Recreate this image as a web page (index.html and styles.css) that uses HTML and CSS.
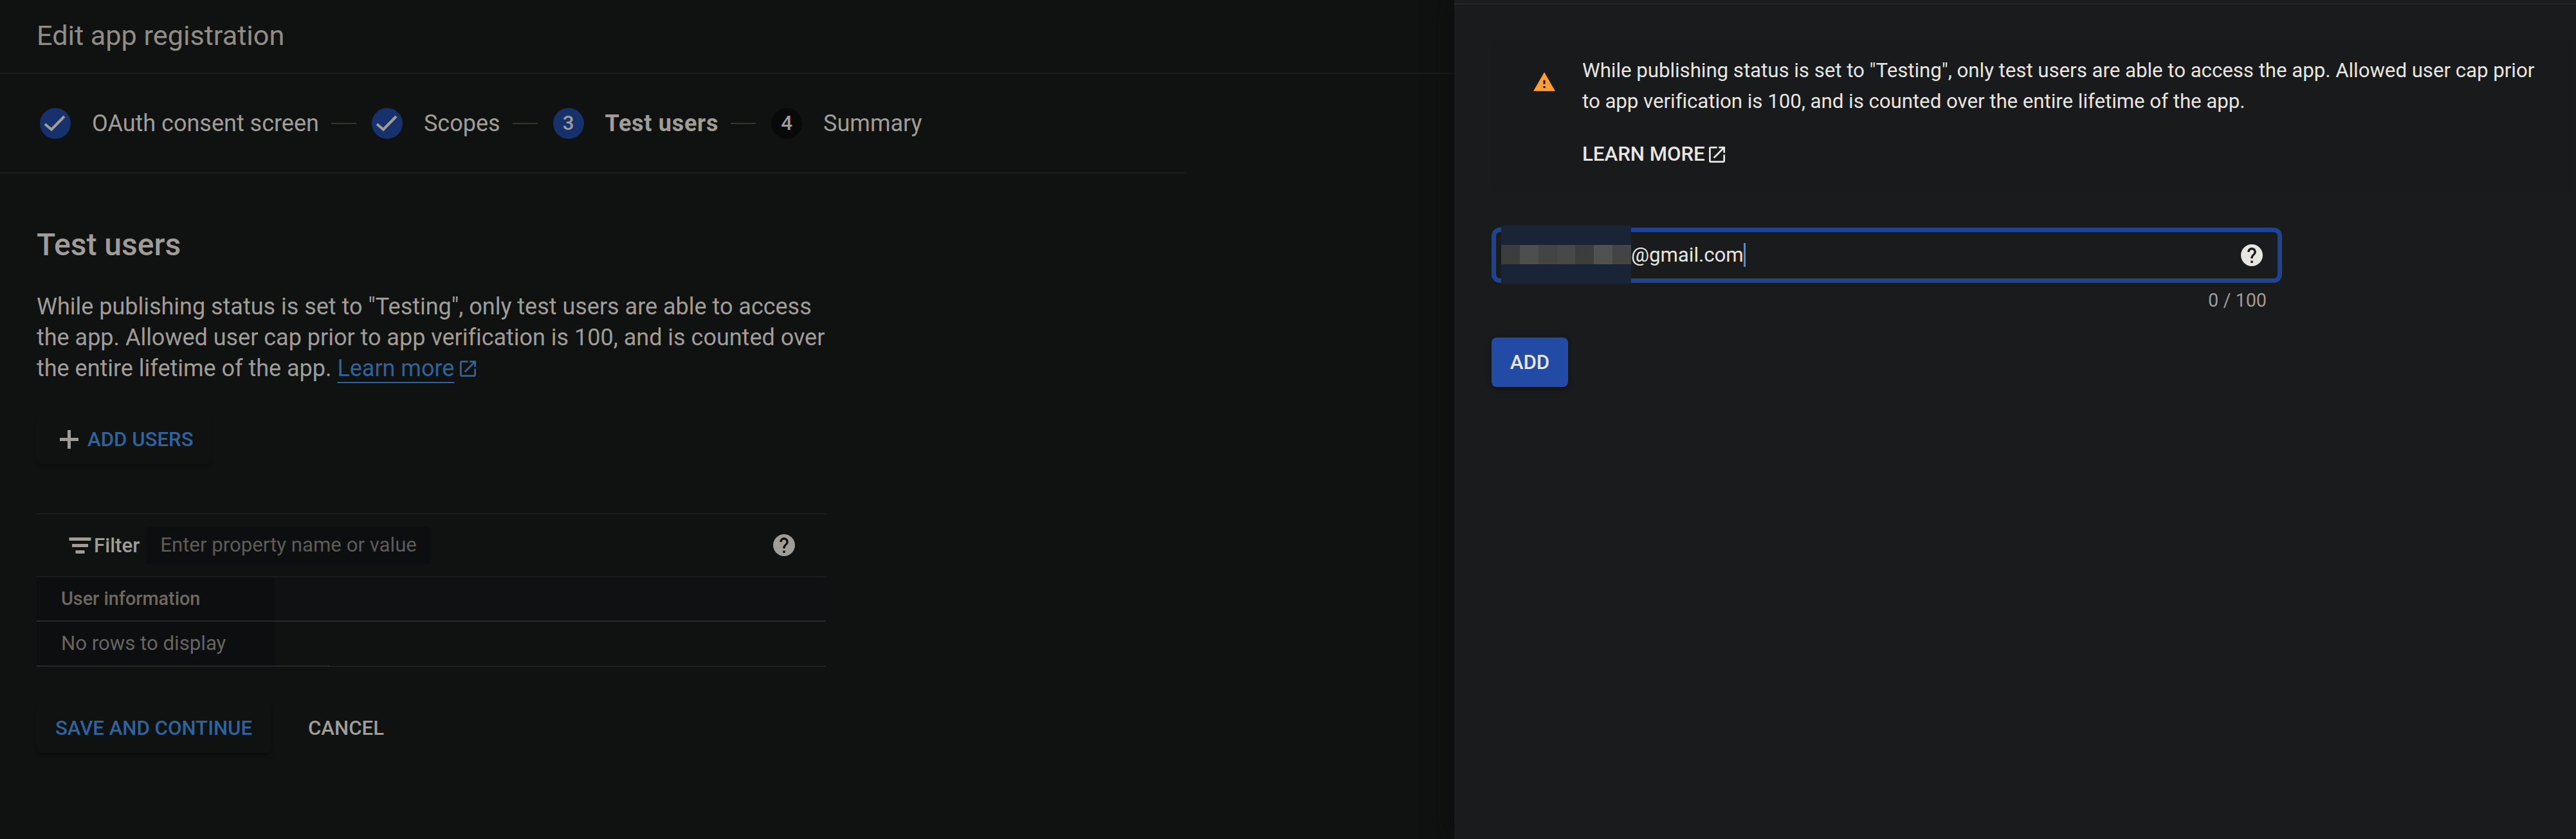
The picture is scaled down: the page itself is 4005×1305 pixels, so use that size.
FILE: index.html
```html
<!DOCTYPE html>
<html lang="en">
<head>
<meta charset="utf-8">
<title>Edit app registration</title>
<link rel="stylesheet" href="styles.css">
</head>
<body>
<svg class="defs" aria-hidden="true">
  <symbol id="help" viewBox="2 2 20 20"><path d="M12 2C6.48 2 2 6.48 2 12s4.480 10 10 10 10-4.480 10-10S17.520 2 12 2zm1 17h-2v-2h2v2zm2.070-7.750l-.9.920C13.450 12.900 13 13.500 13 15h-2v-.5c0-1.100.45-2.100 1.170-2.830l1.240-1.260c.37-.36.59-.86.59-1.410 0-1.100-.9-2-2-2s-2 .9-2 2H8c0-2.210 1.790-4 4-4s4 1.790 4 4c0 .88-.36 1.680-.93 2.250z"/></symbol>
  <symbol id="launch" viewBox="3 3 18 18"><path d="M19 19H5V5h7V3H5a2 2 0 0 0-2 2v14a2 2 0 0 0 2 2h14c1.100 0 2-.9 2-2v-7h-2v7zM14 3v2h3.590l-9.830 9.830 1.410 1.410L19 6.410V10h2V3h-7z"/></symbol>
  <symbol id="check" viewBox="0 0 48 48"><path d="M8 25l10 8.500L38 13" fill="none" stroke="currentColor" stroke-width="4.200"/></symbol>
</svg>
<div class="app">
  <main class="page">
    <header class="title">Edit app registration</header>
    <nav class="stepper">
      <span class="dot done"><svg><use href="#check"/></svg></span><span class="step">OAuth consent screen</span><i class="dash"></i>
      <span class="dot done"><svg><use href="#check"/></svg></span><span class="step">Scopes</span><i class="dash"></i>
      <span class="dot done">3</span><span class="step current">Test users</span><i class="dash"></i>
      <span class="dot">4</span><span class="step">Summary</span>
    </nav>
    <section class="content">
      <h1>Test users</h1>
      <p class="intro">While publishing status is set to "Testing", only test users are able to access<br>the app. Allowed user cap prior to app verification is 100, and is counted over<br>the entire lifetime of the app. <a class="link">Learn more</a><svg class="launch"><use href="#launch"/></svg></p>
      <button class="btn raised add-users"><i class="plus"></i>ADD USERS</button>
      <div class="filter">
        <svg class="lines" viewBox="0 0 34 25"><path d="M0 0h34v5H0zM4.500 10h25v5h-25zM10 20h14v5H10z"/></svg>
        <span class="filter-name">Filter</span>
        <span class="filter-input">Enter property name or value</span>
        <svg class="help"><use href="#help"/></svg>
      </div>
      <div class="row head"><span class="cell">User information</span></div>
      <div class="row"><span class="cell">No rows to display</span></div>
      <div class="end"><i></i></div>
      <div class="actions">
        <button class="btn raised save">SAVE AND CONTINUE</button>
        <button class="btn cancel">CANCEL</button>
      </div>
    </section>
  </main>
  <aside class="panel">
    <div class="notice">
      <svg class="warn" viewBox="1 2 22 19"><path d="M1 21h22L12 2 1 21zm12-3h-2v-2h2v2zm0-4h-2v-4h2v4z"/></svg>
      <div class="notice-body">
        <p>While publishing status is set to "Testing", only test users are able to access the app. Allowed user cap prior<br>to app verification is 100, and is counted over the entire lifetime of the app.</p>
        <a class="more">LEARN MORE<svg><use href="#launch"/></svg></a>
      </div>
    </div>
    <div class="field">
      <div class="mask"><b></b><b></b><b></b><b></b><b></b><b></b><b></b></div>
      <span class="value">@gmail.com</span><i class="caret"></i>
      <svg class="help"><use href="#help"/></svg>
    </div>
    <div class="count">0 / 100</div>
    <button class="btn add">ADD</button>
  </aside>
</div>
</body>
</html>
```

FILE: styles.css
```css
* { box-sizing: border-box; }
body { margin: 0; background: #101211; font-family: Roboto, "Liberation Sans", sans-serif; font-size: 31.2px; color: #a09d99; }
svg { display: block; fill: currentColor; flex: none; }
.defs { display: none; }
h1, p { margin: 0; }
.app { display: flex; width: 4005px; height: 1305px; overflow: hidden; }

.page { width: 2261px; flex: none; }
.title { height: 115px; padding: 31px 0 0 57px; border-bottom: 2px solid #1a1c1b; font-size: 43.2px; line-height: 50px; color: #918c85; }
.stepper { display: flex; align-items: center; width: 1843px; height: 155px; border-bottom: 2px solid #1a1c1b; padding-left: 62px; font-size: 36px; }
.dot { display: flex; align-items: center; justify-content: center; width: 48px; height: 48px; margin-right: 33px; border-radius: 50%; background: #080909; font-size: 31.2px; font-weight: 500; }
.dot svg { width: 48px; height: 48px; }
.dot.done { background: #17316c; }
.step { padding-top: 1px; }
.step.current { font-weight: 700; letter-spacing: 0.7px; }
.dash { width: 39px; height: 2px; margin: 0 24px 0 19px; background: #37342e; }

.content { width: 1286px; padding: 83px 0 0 57px; }
h1 { font-size: 48px; line-height: 56px; font-weight: 500; }
.intro { margin-top: 44px; font-size: 36px; line-height: 48px; letter-spacing: -0.015px; white-space: nowrap; }
.link { color: #2e639d; text-decoration: underline; text-decoration-thickness: 2px; text-underline-offset: 9px; text-decoration-skip-ink: none; }
.launch { display: inline-block; width: 25px; height: 25px; margin-left: 9px; color: #2e639d; vertical-align: -1px; }

.btn { display: flex; align-items: center; height: 77px; padding: 0; border: 0; border-radius: 8px; background: none; color: #a09d99; font: 500 31.2px/36px Roboto, "Liberation Sans", sans-serif; white-space: nowrap; }
.raised { color: #2e639d; background: #101211; box-shadow: 0 4px 5px -1px #0b0c0c; }
.add-users { width: 271px; margin-top: 48px; padding-left: 36px; }
.plus { width: 29px; height: 29px; margin-right: 14px; background: linear-gradient(#a09d99, #a09d99) center / 29px 5px no-repeat, linear-gradient(#a09d99, #a09d99) center / 5px 29px no-repeat; }

.filter { display: flex; align-items: center; height: 100px; margin-top: 76px; padding: 0 50px; border: solid #1a1c1b; border-width: 2px 0; }
.lines { width: 35px; height: 25px; }
.filter-name { margin: 0 10px 0 4px; font-weight: 500; color: #a09d99; }
.filter-input { width: 442px; height: 58px; padding-left: 22px; background: #0d0e10; color: #5d5b58; line-height: 58px; white-space: nowrap; }
.help { width: 34px; height: 34px; margin-left: auto; }

.row { display: flex; width: 1227px; height: 69px; border-bottom: 2px solid #28292b; }
.row + .row { height: 68px; border: 0; }
.cell { display: flex; align-items: center; width: 370px; padding: 0 0 2px 38px; background: #0d0e10; color: #666462; }
.head { background: #101113; }
.head .cell { font-size: 28.8px; font-weight: 500; color: #6e685e; }
.end { width: 1227px; height: 2px; border-bottom: 1px solid #28292b; }
.end i { display: block; width: 456px; height: 2px; background: #28292b; }
.actions { display: flex; margin-top: 57px; }
.save { width: 364px; justify-content: center; }
.cancel { margin-left: 58px; }

.panel { position: relative; flex: 1; padding: 64px 0 0 58px; background: #1a1b1d; box-shadow: 0 0 36px #0a0b0d; color: #e8e6e3; background-image: linear-gradient(#26282a, #26282a); background-size: 100% 2px; background-position: 0 5px; background-repeat: no-repeat; }
.notice { display: flex; width: 1680px; height: 236px; padding: 22px 0 0 65px; border-radius: 8px; background: #191a1b; }
.warn { width: 34px; height: 30px; margin: 26px 42px 0 0; color: #ff9c35; }
.notice p { line-height: 48px; letter-spacing: -0.01px; white-space: nowrap; }
.more { display: flex; align-items: center; margin-top: 38px; line-height: 40px; font-weight: 500; }
.more svg { width: 25px; height: 25px; margin-left: 6px; }
.field { position: relative; display: flex; align-items: center; width: 1229px; height: 86px; margin-top: 54px; padding: 0 23px 0 210px; border: 7px solid #1e4394; border-radius: 13px; }
.mask { position: absolute; left: 8px; top: -10px; display: flex; width: 202px; height: 90px; background: #192436; }
.mask b { flex: 1; height: 30px; margin-top: 30px; background: #3c3e3d; }
.mask b:nth-child(2) { background: #4d4f4e; }
.mask b:nth-child(3), .mask b:nth-child(7) { background: #434544; }
.mask b:nth-child(4) { background: #474948; }
.mask b:nth-child(6) { background: #505251; }
.value { padding-bottom: 1px; }
.caret { width: 3px; height: 37px; margin-top: -1px; background: #4a8fdb; }
.count { width: 1205px; margin-top: 9px; font-size: 28.8px; line-height: 36px; text-align: right; color: #9f9b95; }
.add { justify-content: center; width: 119px; margin-top: 40px; background: #224ba5; color: #e8e6e3; box-shadow: 0 3px 6px #101113; }
```
